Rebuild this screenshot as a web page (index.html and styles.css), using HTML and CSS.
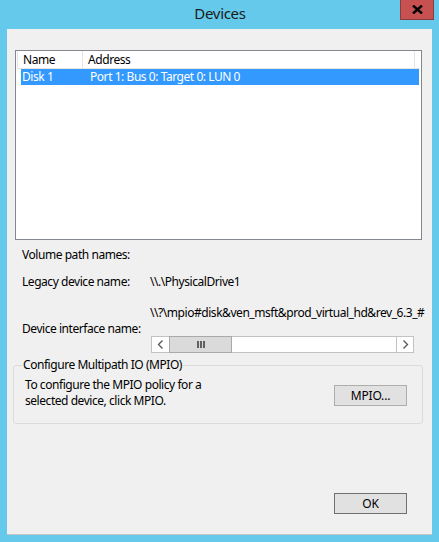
FILE: index.html
```html
<!DOCTYPE html>
<html>
<head>
<meta charset="utf-8">
<link rel="stylesheet" href="styles.css">
</head>
<body>
<div class="window">
  <div class="titlebar">
    <span class="title">Devices</span>
    <button class="close" aria-label="Close">
      <svg width="11" height="9" viewBox="0 0 11 9"><path d="M1 0.5 L10 8.5 M10 0.5 L1 8.5" stroke="#000" stroke-width="2.4" fill="none"/></svg>
    </button>
  </div>
  <div class="client">
    <div class="listbox">
      <div class="lv-header">
        <div class="hcell name">Name</div>
        <div class="hcell addr">Address</div>
        <div class="hcell rest"></div>
      </div>
      <div class="lv-row selected">
        <span class="c-name">Disk 1</span>
        <span class="c-addr">Port 1: Bus 0: Target 0: LUN 0</span>
      </div>
    </div>

    <div class="fields">
      <div class="label vol">Volume path names:</div>
      <div class="pair legacy">
        <span class="label">Legacy device name:</span>
        <span class="value">\\.\PhysicalDrive1</span>
      </div>
      <div class="iface">
        <div class="value iface-value">\\?\mpio#disk&amp;ven_msft&amp;prod_virtual_hd&amp;rev_6.3_#</div>
        <div class="label iface-label">Device interface name:</div>
        <div class="hscroll">
          <div class="sb-btn"><svg width="7" height="9" viewBox="0 0 7 9"><path d="M5.5 0.5 L1.5 4.5 L5.5 8.5" stroke="#555" stroke-width="1.3" fill="none"/></svg></div>
          <div class="sb-thumb"><span class="grip"></span><span class="grip"></span><span class="grip"></span></div>
          <div class="sb-track"></div>
          <div class="sb-btn"><svg width="7" height="9" viewBox="0 0 7 9"><path d="M1.5 0.5 L5.5 4.5 L1.5 8.5" stroke="#555" stroke-width="1.3" fill="none"/></svg></div>
        </div>
      </div>
    </div>

    <fieldset class="group">
      <legend>Configure Multipath IO (MPIO)</legend>
      <div class="group-body">
        <div class="group-text">
          <div class="gline">To configure the MPIO policy for a</div>
          <div class="gline">selected device, click MPIO.</div>
        </div>
        <button class="btn">MPIO...</button>
      </div>
    </fieldset>

    <div class="footer">
      <button class="btn default">OK</button>
    </div>
  </div>
</div>
</body>
</html>
```

FILE: styles.css
```css
* { box-sizing: border-box; }
html, body {
  margin: 0;
  padding: 0;
  width: 439px;
  height: 542px;
  overflow: hidden;
}
body {
  background: #64c9ea;
  font-family: "Noto Sans", "Open Sans", sans-serif;
  font-size: 12px;
  letter-spacing: -0.45px;
  color: #000;
}
.window {
  width: 439px;
  height: 542px;
}
.titlebar {
  position: relative;
  height: 29px;
  display: flex;
  justify-content: center;
}
.title {
  font-size: 15px;
  line-height: 18px;
  margin-top: 4px;
  color: #1b1b1b;
  letter-spacing: -0.3px;
  padding-left: 1px;
}
.close {
  position: absolute;
  top: 0;
  left: 400px;
  width: 34px;
  height: 20px;
  padding: 0;
  margin: 0;
  background: #c75050;
  border: 1px solid #8a3b3b;
  border-top: none;
  display: flex;
  align-items: center;
  justify-content: center;
}
.client {
  margin: 0 7px;
  height: 506px;
  background: #f0f0f0;
  border-bottom: 1px solid #c4c4c4;
  padding-top: 21px;
  display: flex;
  flex-direction: column;
}
.listbox {
  margin-left: 8px;
  width: 407px;
  height: 190px;
  border: 1px solid #828790;
  background: #fff;
  padding: 0 1px;
}
.lv-header {
  display: flex;
  height: 18px;
}
.hcell {
  border-right: 1px solid #e5e5e5;
  border-bottom: 1px solid #e5e5e5;
  line-height: 17px;
  padding-left: 5px;
  color: #000;
}
.hcell.name { width: 67px; border-left: 1px solid #e5e5e5; }
.hcell.addr { width: 337px; border-right: 1px solid #e5e5e5; }
.hcell.rest { flex: 1; border-right: none; }
.lv-row {
  display: flex;
  height: 16px;
  line-height: 16px;
  margin-left: 4px;
  margin-right: 1px;
}
.lv-row.selected {
  background: #3399ff;
  color: #fff;
}
.c-name { width: 68px; padding-left: 1px; }
.c-addr { padding-left: 1px; }

.fields {
  padding-left: 15px;
}
.label, .value {
  line-height: 16px;
  white-space: nowrap;
}
.vol { margin-top: 7px; }
.pair {
  display: flex;
  margin-top: 11px;
}
.pair .label { width: 128px; }
.iface {
  display: grid;
  grid-template-columns: 128px 264px;
  grid-template-rows: 16px 15px 17px;
  margin-top: 15px;
}
.iface-value {
  grid-column: 2;
  grid-row: 1;
}
.iface-label {
  grid-column: 1;
  grid-row: 2;
  line-height: 16px;
}
.hscroll {
  grid-column: 2;
  grid-row: 3;
  margin-left: 1px;
  width: 263px;
  height: 17px;
  display: flex;
  border: 1px solid #c2c2c2;
  background: #fff;
}
.sb-btn {
  width: 17px;
  display: flex;
  align-items: center;
  justify-content: center;
  background: #fff;
}
.sb-btn:last-child { border-left: 1px solid #c2c2c2; width: 17px; }
.sb-thumb {
  width: 63px;
  background: #dadada;
  border: 1px solid #a9a9a9;
  margin-top: -1px;
  margin-bottom: -1px;
  display: flex;
  align-items: center;
  justify-content: center;
  gap: 1px;
}
.grip {
  width: 2px;
  height: 7px;
  background: #606060;
}
.sb-track { flex: 1; }

.group {
  margin: 4px 0 0 6px;
  width: 410px;
  height: 67px;
  border: 1px solid #dcdcdc;
  border-radius: 3px;
  padding: 0;
  min-width: 0;
}
.group legend {
  margin-left: 8px;
  padding: 0 1px 0 1px;
  line-height: 16px;
}
.group-body {
  display: flex;
  justify-content: space-between;
  align-items: flex-start;
  padding: 4px 15px 0 11px;
}
.group-text {
  display: flex;
  flex-direction: column;
}
.gline {
  line-height: 16px;
  white-space: nowrap;
}
.btn {
  font-family: "Noto Sans", "Open Sans", sans-serif;
  font-size: 12px;
  letter-spacing: -0.2px;
  width: 73px;
  height: 21px;
  background: #e1e1e1;
  border: 1px solid #adadad;
  padding: 0;
  margin: 8px 0 0 0;
  color: #000;
  line-height: 19px;
}
.footer {
  margin-top: auto;
  padding-bottom: 20px;
  display: flex;
  justify-content: flex-end;
  padding-right: 25px;
}
.footer .btn { margin: 0; }
.btn.default { border-color: #707070; }
```
